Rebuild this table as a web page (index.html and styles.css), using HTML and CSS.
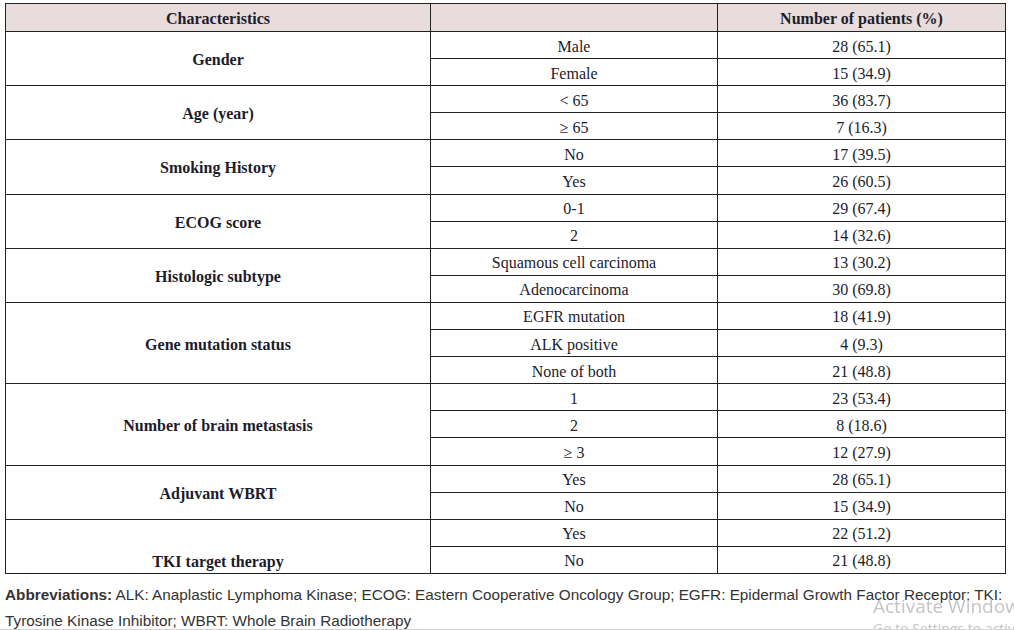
FILE: index.html
```html
<!DOCTYPE html>
<html>
<head>
<meta charset="utf-8">
<link rel="stylesheet" href="styles.css">
</head>
<body>
<div class="page">
<table class="data">
  <colgroup><col class="c1"><col class="c2"><col class="c3"></colgroup>
  <thead>
    <tr class="head"><th>Characteristics</th><th></th><th>Number of patients (%)</th></tr>
  </thead>
  <tbody>
    <tr><th rowspan="2">Gender</th><td>Male</td><td>28 (65.1)</td></tr>
    <tr><td>Female</td><td>15 (34.9)</td></tr>
    <tr><th rowspan="2">Age (year)</th><td>&lt; 65</td><td>36 (83.7)</td></tr>
    <tr><td>≥ 65</td><td>7 (16.3)</td></tr>
    <tr><th rowspan="2">Smoking History</th><td>No</td><td>17 (39.5)</td></tr>
    <tr><td>Yes</td><td>26 (60.5)</td></tr>
    <tr><th rowspan="2">ECOG score</th><td>0-1</td><td>29 (67.4)</td></tr>
    <tr><td>2</td><td>14 (32.6)</td></tr>
    <tr><th rowspan="2">Histologic subtype</th><td>Squamous cell carcinoma</td><td>13 (30.2)</td></tr>
    <tr><td>Adenocarcinoma</td><td>30 (69.8)</td></tr>
    <tr><th rowspan="3">Gene mutation status</th><td>EGFR mutation</td><td>18 (41.9)</td></tr>
    <tr><td>ALK positive</td><td>4 (9.3)</td></tr>
    <tr><td>None of both</td><td>21 (48.8)</td></tr>
    <tr><th rowspan="3">Number of brain metastasis</th><td>1</td><td>23 (53.4)</td></tr>
    <tr><td>2</td><td>8 (18.6)</td></tr>
    <tr><td>≥ 3</td><td>12 (27.9)</td></tr>
    <tr><th rowspan="2">Adjuvant WBRT</th><td>Yes</td><td>28 (65.1)</td></tr>
    <tr><td>No</td><td>15 (34.9)</td></tr>
    <tr><th rowspan="2" class="bottom">TKI target therapy</th><td>Yes</td><td>22 (51.2)</td></tr>
    <tr><td>No</td><td>21 (48.8)</td></tr>
  </tbody>
</table>
<p class="note"><b>Abbreviations:</b> ALK: Anaplastic Lymphoma Kinase; ECOG: Eastern Cooperative Oncology Group; EGFR: Epidermal Growth Factor Receptor; TKI: Tyrosine Kinase Inhibitor; WBRT: Whole Brain Radiotherapy</p>
</div>
<div class="watermark">
  <div class="wm1">Activate Windows</div>
  <div class="wm2">Go to Settings to activate Windows.</div>
</div>
<div class="edge"></div>
</body>
</html>
```

FILE: styles.css
```css
html, body {
  margin: 0;
  padding: 0;
  background: #fff;
  overflow: hidden;
}
.page {
  padding: 3px 8px 0 5px;
}
.data {
  border-collapse: collapse;
  width: 1000px;
  table-layout: fixed;
  font-family: "Liberation Serif", serif;
  font-size: 16px;
  color: #1c1c2c;
}
.c1 { width: 425px; }
.c2 { width: 287px; }
.c3 { width: 288px; }
.data th, .data td {
  border: 1px solid #222;
  text-align: center;
  vertical-align: middle;
  padding: 2px 4px 0;
  height: 24.1px;
  line-height: 17px;
}
.data th { font-weight: bold; }
.data td { font-weight: normal; }
.head th {
  background: #e8dcdc;
  height: 25px;
}
.data th.bottom {
  vertical-align: bottom;
  padding-bottom: 3px;
}
.note {
  margin: 8px 0 0 0;
  font-family: "Liberation Sans", Arial, sans-serif;
  font-size: 15.3px;
  line-height: 26px;
  color: #333;
}
.watermark {
  position: fixed;
  left: 873px;
  top: 594px;
  color: #c4c4c4;
  font-family: "Open Sans", "Liberation Sans", sans-serif;
  white-space: nowrap;
}
.wm1 { font-size: 19px; line-height: 24px; }
.wm2 { font-size: 14px; line-height: 22px; }
.edge {
  position: fixed;
  left: 0;
  right: 0;
  top: 629px;
  height: 1px;
  background: #d4d4d4;
}
```
